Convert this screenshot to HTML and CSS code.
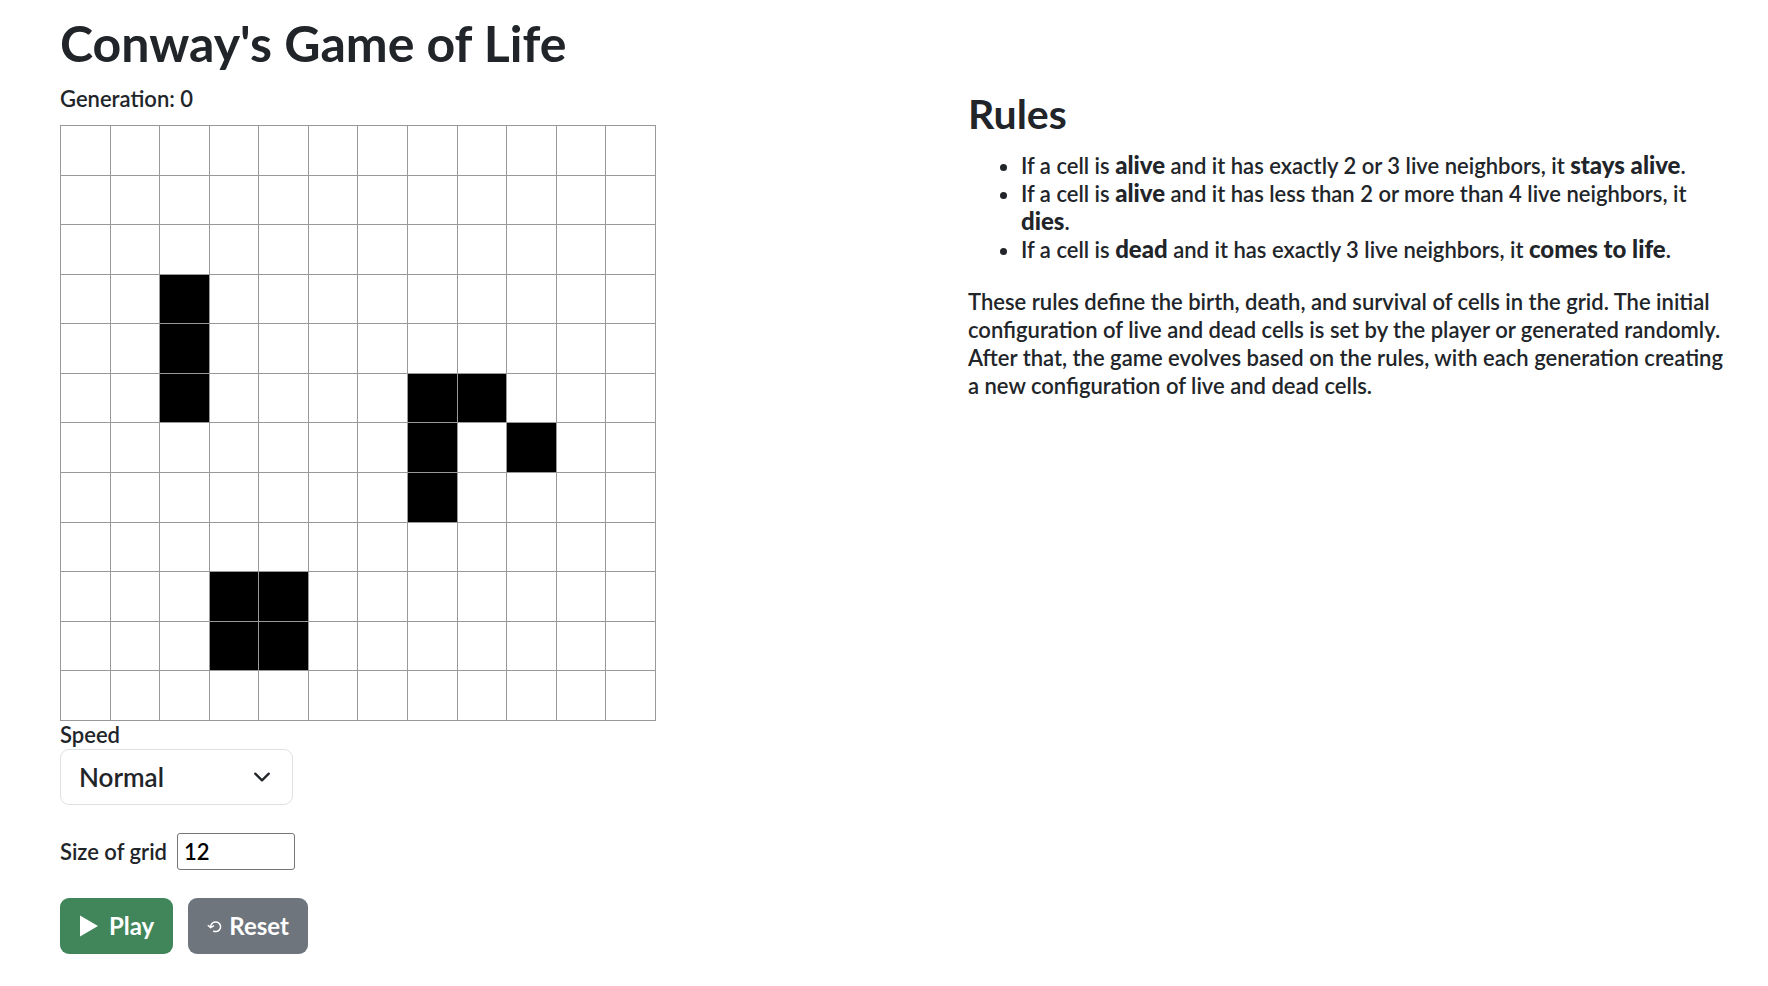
FILE: index.html
```html
<!DOCTYPE html>
<html lang="en">
<head>
<meta charset="utf-8">
<title>Conway's Game of Life</title>
<link rel="stylesheet" href="styles.css">
</head>
<body>
<main class="layout">
  <section class="game">
    <h1 class="title">Conway's Game of Life</h1>
    <p class="generation">Generation: 0</p>
    <div class="board" id="board"></div>
    <div class="field">
      <label class="label" for="speed">Speed</label>
      <div class="select-wrap">
        <select class="select" id="speed">
          <option>Slow</option>
          <option selected>Normal</option>
          <option>Fast</option>
        </select>
        <svg class="chevron" viewBox="0 0 16 16" aria-hidden="true"><path d="m2 5 6 6 6-6" fill="none" stroke="currentColor" stroke-width="2" stroke-linecap="round" stroke-linejoin="round"/></svg>
      </div>
    </div>
    <div class="size-row">
      <label class="label" for="size">Size of grid</label>
      <input class="size-input" id="size" type="text" inputmode="numeric" value="12">
    </div>
    <div class="actions">
      <button class="btn btn-play" type="button"><svg class="icon-play" viewBox="0 0 20 22" aria-hidden="true"><path d="M1 0.5 19 11 1 21.5Z" fill="currentColor"/></svg>Play</button>
      <button class="btn btn-reset" type="button"><svg class="icon-reset" viewBox="0 0 15 13" aria-hidden="true"><path d="M3.6 7a5 4.8 0 1 1 2.6 4M0.8 5.2 3.6 7.6 7 5.6" fill="none" stroke="currentColor" stroke-width="1.5"/></svg>Reset</button>
    </div>
  </section>
  <section class="rules">
    <h2 class="subtitle">Rules</h2>
    <ul class="rule-list">
      <li>If a cell is <strong>alive</strong> and it has exactly 2 or 3 live neighbors, it <strong>stays alive</strong>.</li>
      <li>If a cell is <strong>alive</strong> and it has less than 2 or more than 4 live neighbors, it <strong>dies</strong>.</li>
      <li>If a cell is <strong>dead</strong> and it has exactly 3 live neighbors, it <strong>comes to life</strong>.</li>
    </ul>
    <p class="summary">These rules define the birth, death, and survival of cells in the grid. The initial configuration of live and dead cells is set by the player or generated randomly. After that, the game evolves based on the rules, with each generation creating a new configuration of live and dead cells.</p>
  </section>
</main>
<script src="board.js"></script>
</body>
</html>
```
FILE: styles.css
```css
* { box-sizing: border-box; }
body {
  margin: 0;
  background: #fff;
  color: #212529;
  font-family: Lato, "Open Sans", sans-serif;
  font-size: 22px;
  font-weight: 600;
  line-height: 28px;
}
h1, h2, p, ul { margin: 0; }
.layout {
  display: grid;
  grid-template-columns: 908fr 800fr;
  padding: 13px 0 32px 60px;
}
.title { font-size: 50px; line-height: 60px; font-weight: 700; margin-bottom: 12px; }
.generation { margin-bottom: 12px; }
.board {
  display: grid;
  grid-template-columns: repeat(12, 1fr);
  gap: 1px;
  width: 66%;
  max-width: 596px;
  aspect-ratio: 1;
  padding: 1px;
  background: #999;
}
.cell { padding: 0; border: 0; background: #fff; }
.cell-live { background: #000; }
.field { display: flex; flex-direction: column; align-items: flex-start; }
.select-wrap { position: relative; display: flex; }
.select {
  appearance: none;
  width: 233px;
  height: 56px;
  padding: 0 56px 0 18px;
  border: 1px solid #dee2e6;
  border-radius: 9px;
  background: #fff;
  color: inherit;
  font: inherit;
  font-size: 26px;
}
.chevron { position: absolute; right: 22px; top: 19px; width: 18px; height: 18px; pointer-events: none; }
.size-row { display: flex; align-items: center; gap: 10px; margin-top: 28px; }
.size-input {
  width: 118px;
  height: 37px;
  padding: 0 6px;
  border: 1px solid #767676;
  border-radius: 3px;
  background: #fff;
  color: #000;
  font: inherit;
}
.actions { display: flex; gap: 15px; margin-top: 28px; }
.btn {
  display: flex;
  align-items: center;
  height: 56px;
  padding: 0 19px;
  border: 0;
  border-radius: 9px;
  color: #fff;
  font: inherit;
  font-size: 24px;
  font-weight: 700;
}
.btn-play { background: #41865a; gap: 10px; }
.btn-reset { background: #6e757d; gap: 7px; }
.icon-play { width: 20px; height: 22px; }
.icon-reset { width: 15px; height: 13px; }
.rules { padding: 75px 36px 0 0; }
.subtitle { font-size: 41px; line-height: 52px; font-weight: 700; margin-bottom: 12px; }
.rule-list { padding-left: 53px; margin-bottom: 24px; }
strong { font-size: 24px; font-weight: 900; line-height: 1; }
```
FILE: board.js
```js
const size = 12;
const live = new Set(["3,2", "4,2", "5,2", "5,7", "5,8", "6,7", "6,9", "7,7", "9,3", "9,4", "10,3", "10,4"]);
const board = document.getElementById("board");

for (let row = 0; row < size; row++) {
  for (let col = 0; col < size; col++) {
    const cell = document.createElement("button");
    const alive = live.has(`${row},${col}`);
    cell.type = "button";
    cell.className = alive ? "cell cell-live" : "cell";
    cell.setAttribute("aria-label", `Row ${row + 1}, column ${col + 1}`);
    cell.setAttribute("aria-pressed", alive);
    board.append(cell);
  }
}
```
